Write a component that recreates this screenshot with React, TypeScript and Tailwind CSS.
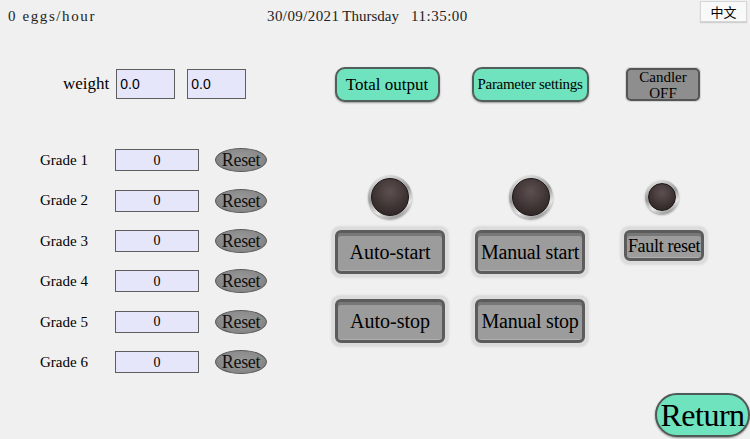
import React from "react";

const serif = "font-['Liberation_Serif','Times_New_Roman',serif]";

function Light({ size }: { size: number }) {
  return (
    <div
      className="rounded-full bg-[linear-gradient(160deg,#f4f4f4_0%,#9a9a9a_45%,#e8e8e8_70%,#6c6c6c_100%)] p-[3px] shadow-[0_1px_2px_rgba(0,0,0,0.35)]"
      style={{ width: size, height: size }}
    >
      <div className="w-full h-full rounded-full border border-[#1c1616] bg-[radial-gradient(circle_at_50%_35%,#5e5050_0%,#3f3434_55%,#261e1e_100%)]" />
    </div>
  );
}

function GrayButton({ label, w, h, size }: { label: string; w: number; h: number; size: string }) {
  return (
    <div
      className="rounded-[8px] bg-[#dcdcdc] p-[3px] shadow-[0_0_3px_#c4c4c4]"
      style={{ width: w, height: h }}
    >
      <div
        className={`w-full h-full rounded-[6px] border-[3px] border-[#5c5c5c] bg-[#9c9c9c] shadow-[inset_0_3px_0_#777,inset_0_-1px_0_#b0b0b0] flex items-center justify-center text-black ${serif} ${size} leading-none whitespace-nowrap`}
      >
        {label}
      </div>
    </div>
  );
}

function GradeRow({ n }: { n: number }) {
  return (
    <div className="h-[40.4px] flex items-center pl-[40px]">
      <span className={`w-[75px] text-[15px] text-black ${serif}`}>Grade {n}</span>
      <div className={`w-[84px] h-[22px] border border-[#5e5e5e] bg-[#e6e6fa] flex items-center justify-center text-[14px] text-black ${serif}`}>
        0
      </div>
      <div
        className={`ml-[16px] w-[52px] h-[24px] rounded-[50%] border border-[#5a5a5a] bg-[radial-gradient(ellipse_at_50%_45%,#9a9a9a_0%,#8a8a8a_60%,#6e6e6e_100%)] flex items-center justify-center text-[18px] text-[#111] ${serif} leading-none tracking-[-0.3px]`}
      >
        Reset
      </div>
    </div>
  );
}

export default function App() {
  return (
    <div className="w-[750px] h-[439px] bg-[#f0f0f0] flex flex-col overflow-hidden">
      {/* header */}
      <div className="h-[28px] flex items-start">
        <span className={`ml-[8px] mt-[5px] text-[15px] text-[#222] tracking-[1.6px] ${serif}`}>0 eggs/hour</span>
        <span className={`ml-[171px] mt-[5px] text-[15px] text-[#222] tracking-[0.4px] ${serif}`}>30/09/2021</span>
        <span className={`ml-[3px] mt-[5px] text-[15px] text-[#222] ${serif}`}>Thursday</span>
        <span className={`ml-[12px] mt-[5px] text-[15px] text-[#222] tracking-[0.5px] ${serif}`}>11:35:00</span>
        <div className="ml-auto mr-[3px] mt-[1px] w-[47px] h-[21px] bg-[#f9f9f9] border border-[#d6d6d6] shadow-[0_1px_1px_#cfcfcf] flex items-center justify-center text-[13px] text-black font-['Noto_Sans_CJK_SC',sans-serif]">
          中文
        </div>
      </div>

      <div className="flex flex-1">
        {/* left column */}
        <div className="w-[325px] flex flex-col">
          <div className="mt-[41px] h-[30px] flex items-center pl-[63px]">
            <span className={`text-[17px] text-black ${serif}`}>weight</span>
            <div className="ml-[7px] w-[59px] h-[30px] border border-[#5e5e5e] bg-[#e6e6fa] flex items-center pl-[3px] text-[14px] text-black font-['Liberation_Sans',Arial,sans-serif]">
              0.0
            </div>
            <div className="ml-[12px] w-[59px] h-[30px] border border-[#5e5e5e] bg-[#e6e6fa] flex items-center pl-[3px] text-[14px] text-black font-['Liberation_Sans',Arial,sans-serif]">
              0.0
            </div>
          </div>
          <div className="mt-[41px] flex flex-col">
            {[1, 2, 3, 4, 5, 6].map((n) => (
              <GradeRow key={n} n={n} />
            ))}
          </div>
        </div>

        {/* right column */}
        <div className="flex-1 flex flex-col">
          <div className="mt-[39px] grid grid-cols-[130px_150px_120px] justify-items-center">
            <div className={`mr-[6px] w-[105px] h-[35px] rounded-[10px] border-2 border-[#525e5a] bg-[#6fe3bd] shadow-[0_1px_2px_#9a9a9a] flex items-center justify-center text-[17px] text-black ${serif} whitespace-nowrap`}>
              Total output
            </div>
            <div className={`w-[117px] h-[35px] rounded-[10px] border-2 border-[#525e5a] bg-[#6fe3bd] shadow-[0_1px_2px_#9a9a9a] flex items-center justify-center text-[15px] text-black ${serif} whitespace-nowrap tracking-[-0.3px]`}>
              Parameter settings
            </div>
            <div className="mr-[4px] w-[76px] h-[35px] rounded-[5px] bg-[#d4d4d4] p-[1px]">
              <div className={`w-full h-full rounded-[5px] border-2 border-[#555] bg-[#8e8e8e] flex flex-col items-center justify-center text-[15px] leading-[16px] text-black ${serif}`}>
                <span>Candler</span>
                <span>OFF</span>
              </div>
            </div>
          </div>

          <div className="mt-[73px] h-[44px] grid grid-cols-[130px_150px_120px] justify-items-center items-center">
            <Light size={44} />
            <div className="ml-[1px]"><Light size={44} /></div>
            <div className="mr-[6px]"><Light size={34} /></div>
          </div>

          <div className="mt-[8px] grid grid-cols-[130px_150px_120px] justify-items-center items-start">
            <GrayButton label="Auto-start" w={116} h={50} size="text-[20px]" />
            <GrayButton label="Manual start" w={116} h={50} size="text-[20px] tracking-[-0.2px]" />
            <div className="mr-[2px]">
              <GrayButton label="Fault reset" w={86} h={37} size="text-[18px] tracking-[-0.3px]" />
            </div>
          </div>

          <div className="mt-[19px] grid grid-cols-[130px_150px_120px] justify-items-center items-start">
            <GrayButton label="Auto-stop" w={116} h={50} size="text-[20px]" />
            <GrayButton label="Manual stop" w={116} h={50} size="text-[20px] tracking-[-0.2px]" />
          </div>

          <div className="mt-[47px] flex justify-end">
            <div className={`w-[95px] h-[44px] rounded-[22px] border-2 border-[#4f5a56] bg-[#6fe3bd] shadow-[0_1px_2px_#8a8a8a] flex items-center justify-center text-[32px] leading-none text-black ${serif} whitespace-nowrap tracking-[-0.5px]`}>
              Return
            </div>
          </div>
        </div>
      </div>
    </div>
  );
}
